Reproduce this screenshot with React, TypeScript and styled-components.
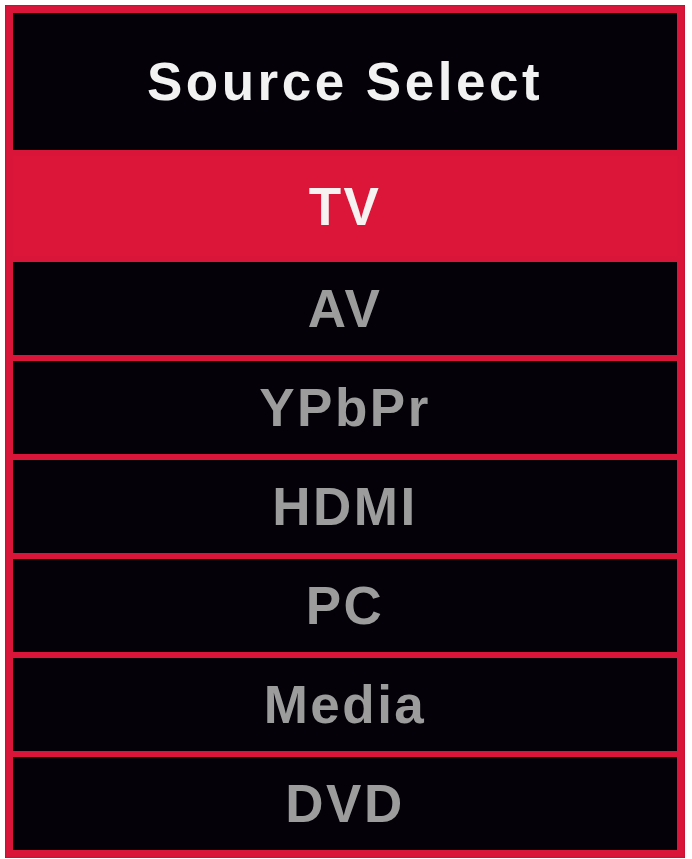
import React from "react";
import styled, { createGlobalStyle } from "styled-components";

const GlobalStyle = createGlobalStyle`
  html, body {
    margin: 0;
    padding: 0;
    background: #ffffff;
  }
  body {
    font-family: "Liberation Sans", Arial, sans-serif;
  }
`;

const Page = styled.div`
  padding: 5px 0 0 5px;
`;

const Menu = styled.div`
  width: 680px;
  box-sizing: border-box;
  background: #d91639;
  padding: 8px;
  display: flex;
  flex-direction: column;
  gap: 6px;
  box-shadow: inset 0 0 2px rgba(120, 0, 20, 0.6);
`;

const Title = styled.div`
  height: 137px;
  background: #040208;
  display: flex;
  align-items: center;
  justify-content: center;
  color: #f2f2f2;
  font-size: 53px;
  font-weight: 700;
  letter-spacing: 3.5px;
`;

const Item = styled.div<{ $active?: boolean }>`
  height: ${(p) => (p.$active ? "100px" : "93px")};
  background: ${(p) => (p.$active ? "#dc1639" : "#040208")};
  display: flex;
  align-items: center;
  justify-content: center;
  color: ${(p) => (p.$active ? "#f7f2f2" : "#9c9c9c")};
  font-size: 53px;
  font-weight: 700;
  letter-spacing: 2.5px;
`;

const sources = ["TV", "AV", "YPbPr", "HDMI", "PC", "Media", "DVD"];

export default function App() {
  const selected = "TV";
  return (
    <>
      <GlobalStyle />
      <Page>
        <Menu>
          <Title>Source Select</Title>
          {sources.map((s) => (
            <Item key={s} $active={s === selected}>
              {s}
            </Item>
          ))}
        </Menu>
      </Page>
    </>
  );
}
